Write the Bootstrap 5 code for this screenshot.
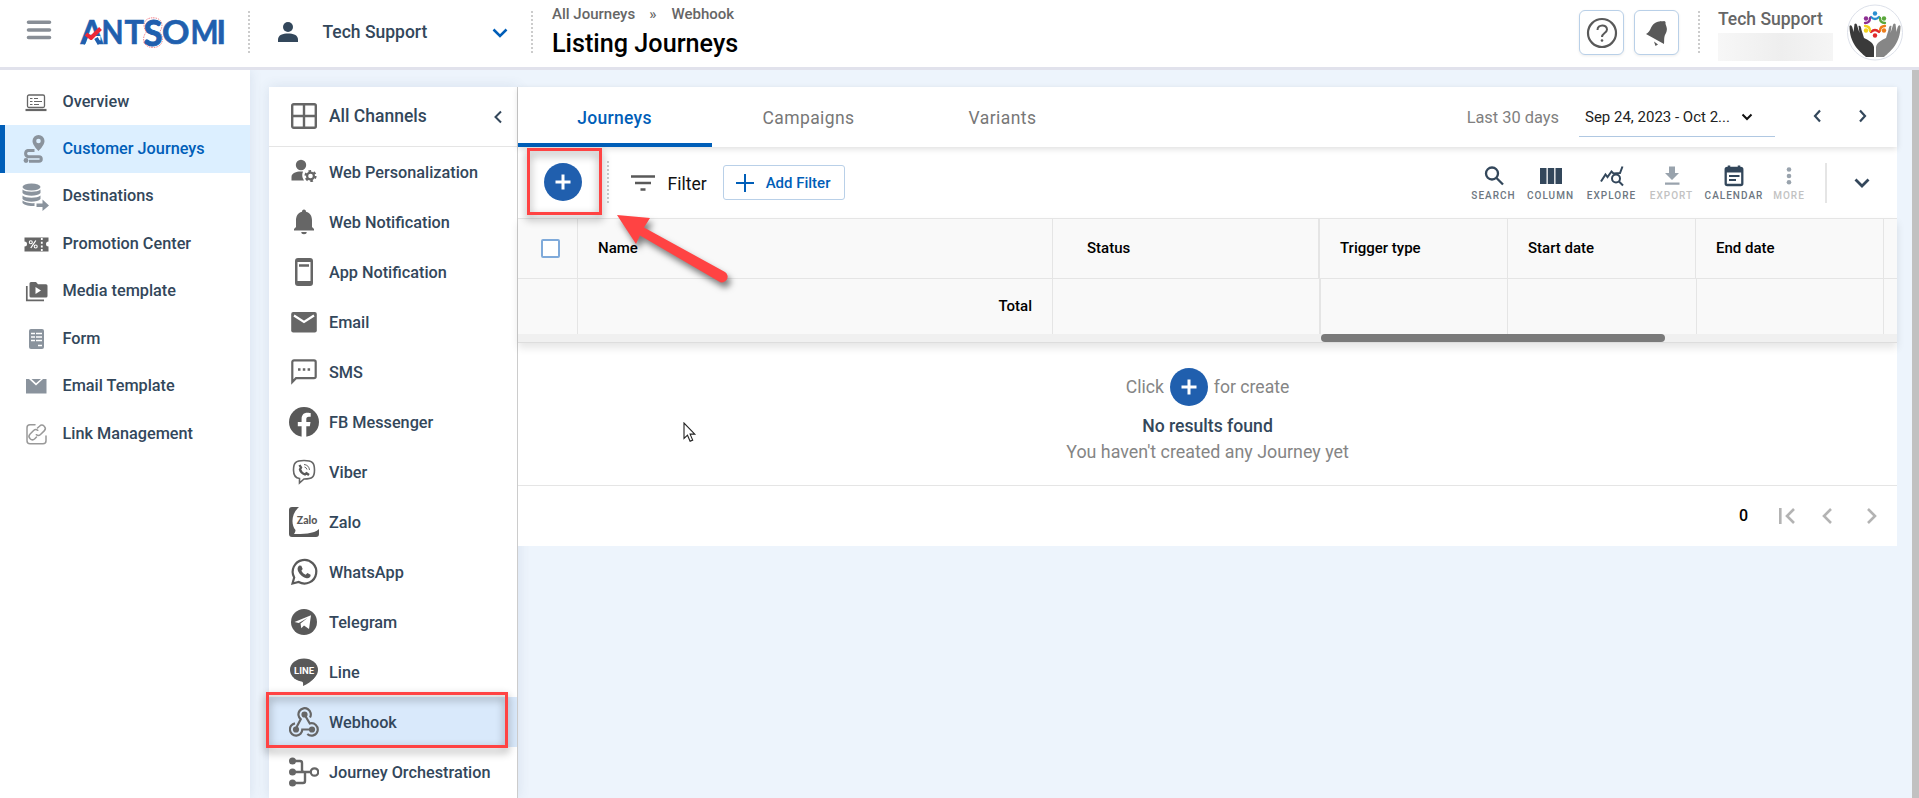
<!DOCTYPE html>
<html lang="en">
<head>
<meta charset="utf-8">
<meta name="viewport" content="width=device-width, initial-scale=1">
<title>Listing Journeys</title>
<link rel="stylesheet" href="https://cdn.jsdelivr.net/npm/bootstrap@5.3.0/dist/css/bootstrap.min.css">
<style>
  :root { --navy:#33475b; --blue:#005eb8; --line:#e5e5e5; --ico:#666; }
  body { font-family:Roboto,"Liberation Sans",sans-serif; font-size:16.25px; background:#edf4fc; color:var(--navy); height:798px; overflow:hidden; }
  svg { display:block; flex:none; }
  .fw-medium { font-weight:500; }
  .topbar { height:70px; background:#fff; border-bottom:3px solid #e1e2ec; padding-right:15px; position:relative; z-index:3; }
  .dots { width:2px; height:44px; flex:none; background:repeating-linear-gradient(#ccc 0 2px,transparent 2px 4px); }
  .t18 { font-size:17.5px; }
  .account { width:283px; }
  .crumbs { font-size:15px; line-height:18px; color:#666; padding-top:5px; }
  .page-title { font-size:25.2px; line-height:30px; color:#000; margin-top:6px; }
  .sq-btn { width:45px; height:45px; border:1px solid #b9d0e8; border-radius:6px; background:#fff; box-shadow:0 1px 3px rgba(0,0,0,.08); }
  .blurred { width:115px; height:28px; background:linear-gradient(90deg,#f7f7f7,#f2f2f2 30%,#eee 55%,#f5f5f5); }
  .body-row { height:728px; }
  .side { width:250px; background:#fff; padding-top:8px; box-shadow:0 0 12px rgba(60,80,120,.12); z-index:1; flex:none; }
  .side a { height:47.45px; display:flex; align-items:center; color:var(--navy); text-decoration:none; border-left:5px solid transparent; padding-left:17px; }
  .side a svg { width:28px; height:28px; margin-right:12.5px; }
  .side a.active { background:#dcefff; border-left-color:var(--blue); color:var(--blue); }
  .channels { width:249px; margin:17px 0 0 19px; background:#fff; border-right:1px solid #ccc; box-shadow:0 0 12px rgba(60,80,120,.12); flex:none; }
  .channels-head { height:60px; border-bottom:1px solid var(--line); padding:0 14px 0 20px; }
  .chan { height:50px; display:flex; align-items:center; padding:2px 0 0 20px; }
  .chan svg { width:30px; height:30px; margin:-2px 10px 0 0; }
  .channels-head .lead-ico { width:30px; height:30px; margin:-1px 10px 0 0; }
  .chan.active { background:#d9e9fb; }
  .mark-red { border:3px solid #ff4343; filter:drop-shadow(0 4px 4px rgba(0,0,0,.45)); position:absolute; z-index:4; pointer-events:none; }
  .mark-hook { left:-3px; top:-5px; width:242px; height:56px; }
  .mark-add { left:9px; top:1px; width:75px; height:67px; }
  .pane { margin-top:17px; width:1379px; height:459px; background:#fff; flex:none; }
  .tabs-row { height:60px; box-shadow:0 2px 6px rgba(0,0,0,.13); position:relative; z-index:1; }
  .tab { width:194px; height:60px; line-height:62.5px; text-align:center; font-size:17.5px; letter-spacing:.42px; color:#777; border-bottom:4px solid transparent; padding-right:1px; }
  .tab.active { color:var(--blue); font-weight:500; border-bottom-color:var(--blue); letter-spacing:.3px; }
  .range { width:196px; height:40px; border-bottom:1px solid #b0c8e2; font-size:15px; color:#222; padding:1px 22px 0 6px; margin:10px 38px 0 20px; }
  .tools { height:71px; }
  .add-btn { border:1px solid #b9d0e8; border-radius:3px; width:122px; height:35px; font-size:15px; color:var(--blue); background:#fff; }
  .circle-add { width:38px; height:38px; border-radius:50%; background:#205fae; display:grid; place-items:center; }
  .tool { font-size:10px; line-height:12px; letter-spacing:1.02px; font-weight:500; color:#6d7781; text-align:center; display:flex; flex-direction:column; align-items:center; }
  .tool svg { width:24px; height:24px; margin-bottom:2px; color:var(--navy); }
  .tool.off { color:#c2c2c2; } .tool.off svg { color:#99a3ad; }
  .grid { height:125px; background:#f9f9f9; border-top:1px solid var(--line); border-bottom:1px solid #ddd; box-shadow:0 5px 8px rgba(0,0,0,.1); font-size:15px; color:#000; font-weight:500; }
  .grow { display:grid; grid-template-columns:60px 475px 267px 188px 188px 188px 13px; }
  .grow > div { border-right:1px solid var(--line); padding-left:20px; display:flex; align-items:center; }
  .grow > div:last-child { border-right:0; }
  .grow .pin { border-right-width:2px; padding-left:34px; }
  .h-head { height:60px; border-bottom:1px solid var(--line); }
  .h-total { height:55px; grid-template-columns:60px 475px 268px 187px 189px 187px 13px; }
  .track { height:8px; background:#f0f0f0; }
  .thumb { width:344px; height:8px; border-radius:4px; background:#7a7a7a; margin-left:803px; }
  .cbx { width:19px; height:19px; border:2px solid #7faada; border-radius:2px; margin-left:3px; background:#fff; }
  .empty { height:143px; border-bottom:1px solid var(--line); padding-top:25px; color:#858585; font-size:17.6px; text-align:center; line-height:26px; }
  .vbar { width:7px; background:#c1c1c1; margin-left:15px; flex:none; }
  .arrow-red { position:absolute; left:94px; top:59px; z-index:5; filter:drop-shadow(3px 5px 3px rgba(0,0,0,.5)); }
  .pointer { position:absolute; left:683px; top:422px; z-index:5; }
</style>
</head>
<body>

<header class="topbar d-flex">
  <svg width="26" height="22" viewBox="0 0 26 22" style="margin:19px 0 0 26px"><path d="M2.500 3.300h21M2.500 11h21M2.500 18.500h21" stroke="#888e96" stroke-width="3.600" stroke-linecap="round"/></svg>
  <svg width="150" height="60" viewBox="77 4 150 60" style="margin:4px 0 0 25px">
    <g font-family="Lato,sans-serif" font-weight="700" font-size="32" fill="#205fae" stroke="#205fae" stroke-width=".6">
      <text x="80.500" y="44.200" textLength="22.500" lengthAdjust="spacingAndGlyphs">A</text>
      <text x="101.500" y="44.200" textLength="22" lengthAdjust="spacingAndGlyphs">N</text>
      <text x="124.500" y="44.200" textLength="19.500" lengthAdjust="spacingAndGlyphs">T</text>
      <text x="162" y="44.200" textLength="27.500" lengthAdjust="spacingAndGlyphs">O</text>
      <text x="190.500" y="44.200" textLength="28" lengthAdjust="spacingAndGlyphs">M</text>
      <text x="216.500" y="44.200">I</text>
      <text x="143.500" y="45.500" font-size="36" stroke-width="1" textLength="19" lengthAdjust="spacingAndGlyphs">S</text>
    </g>
    <path d="M153 17.800c10.500 0 10.500 9.500 6.500 14.200 5 5 4 15.500-6.500 15.500s-11.500-10.500-6.500-15.500c-4-4.700-4-14.200 6.500-14.200z" fill="none" stroke="#ef6a75" stroke-width=".8" stroke-dasharray="1.500 1"/>
    <path d="M85.500 36h15v4.500h-15z" fill="#fff"/>
    <path d="M83 44l4-9M96 38l3.500 6" stroke="#205fae" stroke-width="4"/>
    <path d="M86 34l5 4 9.500-9.500" fill="none" stroke="#ee2737" stroke-width="4" stroke-linejoin="round"/>
  </svg>
  <div class="dots" style="margin:11px 0 0 21px"></div>
  <div class="account d-flex align-items-center fw-medium t18" style="height:64px;padding-left:26px">
    <svg width="24" height="24" viewBox="0 0 24 24" fill="#33475b"><circle cx="12" cy="7" r="5"/><path d="M2 22v-2.500c0-4.500 5-6 10-6s10 1.500 10 6V22z"/></svg>
    <span style="margin-left:22.500px">Tech Support</span>
    <svg class="ms-auto" width="18" height="18" viewBox="0 0 18 18" fill="none" stroke="#005eb8" stroke-width="2.500" style="margin-right:24px"><path d="M2.500 6.500L9 13l6.500-6.500"/></svg>
  </div>
  <div class="dots" style="margin-top:11px;margin-left:-2px"></div>
  <div style="margin-left:19px">
    <div class="crumbs fw-medium d-flex"><span>All Journeys</span><span style="margin:0 15px 0 14px">»</span><span>Webhook</span></div>
    <div class="page-title fw-medium">Listing Journeys</div>
  </div>
  <div class="ms-auto d-flex">
    <div class="sq-btn d-grid" style="place-items:center;margin:10px 10px 0 0">
      <svg width="32" height="32" viewBox="0 0 32 32" fill="none" stroke="#595959" stroke-width="2.200"><circle cx="16" cy="16" r="14"/><path d="M11.500 13c0-6 9.500-6 9.500-.5 0 3.500-5 3.500-5 7.500" stroke-width="2"/><circle cx="16" cy="23.500" r="1.300" fill="#595959" stroke="none"/></svg>
    </div>
    <div class="sq-btn d-grid" style="place-items:center;margin:10px 19px 0 0">
      <svg width="28" height="28" viewBox="0 0 28 28" fill="#595959"><path d="M3 15c5-2 4-8 9-11 4-2.500 7-1.500 9-2 1 0 2 1 1.500 2-.3 2 3 5 .5 10-2.500 4-1.500 7-2 11z"/><path d="M11 22.500l4 3-2.500 1.500z"/></svg>
    </div>
    <div class="dots" style="margin:11px 18px 0 0"></div>
    <div style="width:128px;color:#666;font-size:17.500px;line-height:20px;padding-top:9px" class="fw-medium">Tech Support<div class="blurred" style="margin-top:4px"></div></div>
    <svg width="58" height="58" viewBox="1846 4 58 58" style="margin-top:4px">
      <circle cx="1875" cy="32.500" r="27.500" fill="#fff" stroke="#dde1ea"/>
      <path d="M1849.500 26c2-2 3 1 4 6l1-8q2-1.500 2.500 1l2.500 8-1-7c2-1 2.500 1 3 4l2.500 8c4 2 9 4 10 9v10h-8c-7-6-16.500-14-16.500-31z" fill="#3a3a3a"/>
      <path d="M1900.500 26c-2-2-3 1-4 6l-1-8q-2-1.500-2.500 1l-2.500 8 1-7c-2-1-2.500 1-3 4l-2.500 8c-4 2-9 4-10 9v10h8c7-6 16.500-14 16.500-31z" fill="#868686"/>
      <g fill="none" stroke-width="2.300" stroke-linecap="round">
        <path d="M1871 17q4 4 8 0" stroke="#2b8fd0"/><path d="M1880 18q0 5 5 5" stroke="#5ba83c"/><path d="M1885 26q-5 0-5 5" stroke="#ee7d1a"/><path d="M1879 32q-4-4-8 0" stroke="#e02a2a"/><path d="M1870 31q0-5-5-5" stroke="#f2d21c"/><path d="M1865 23q5 0 5-5" stroke="#8d2f92"/>
      </g>
      <circle cx="1875" cy="13.500" r="2.200" fill="#2b8fd0"/><circle cx="1884" cy="18.500" r="2.200" fill="#5ba83c"/><circle cx="1884" cy="30.500" r="2.200" fill="#ee7d1a"/><circle cx="1875" cy="35.500" r="2.200" fill="#e02a2a"/><circle cx="1866" cy="30.500" r="2.200" fill="#f2d21c"/><circle cx="1866" cy="18.500" r="2.200" fill="#8d2f92"/>
    </svg>
  </div>
</header>

<div class="body-row d-flex">
  <nav class="side fw-medium">
    <a><svg viewBox="0 0 28 28" fill="none" stroke="#666"><rect x="5.500" y="7" width="17" height="12.500" rx="1.500" stroke-width="1.300"/><path d="M8 10.500h2.500M8 13.500h2.500M8 16.500h2.500M12 10.500h4M12 13.500h8M12 16.500h5" stroke-width="1.200"/><path d="M3.500 22h21" stroke-width="2.200"/></svg>Overview</a>
    <a class="active"><svg viewBox="0 0 28 28"><path d="M16.500 0a6 6 0 0 1 6 6.200c0 4-6 9.800-6 9.800s-6-5.800-6-9.800a6 6 0 0 1 6-6.200z" fill="#8a939d"/><circle cx="16.500" cy="6" r="2.300" fill="#dcefff"/><path d="M12.500 15.500H6a3.200 3.200 0 0 0 0 6.200h11a2.300 2.300 0 0 1 0 4.600H7" fill="none" stroke="#8a939d" stroke-width="3"/><circle cx="4" cy="25.500" r="2.400" fill="#8a939d"/></svg>Customer Journeys</a>
    <a><svg viewBox="0 0 28 28" fill="#8a939d"><ellipse cx="9.500" cy="4" rx="9" ry="3.500"/><path d="M.5 6.500c3 3 15 3 18 0V10c-3 3.500-15 3.500-18 0zM.5 12.500c3 3 15 3 18 0V16c-3 3.500-15 3.500-18 0z"/><path d="M.5 18.500c3 2.500 9 3 12 2.500v3c-5 0-10-.5-12-3zM14.500 21.500h6v-4l6.500 6-6.500 5.500v-4h-6z" transform="translate(0 -1)"/></svg>Destinations</a>
    <a><svg viewBox="0 0 28 28"><path d="M2.500 7.500h24v4a2.500 2.500 0 0 0 0 5v5h-24v-5a2.500 2.500 0 0 0 0-5z" fill="#666"/><path d="M19.800 8v13" stroke="#fff" stroke-width="1.800" stroke-dasharray="2 1.700"/><path d="M13.800 10.500l-5 7.500" stroke="#fff" stroke-width="1.300"/><circle cx="8.800" cy="12.300" r="1.500" fill="none" stroke="#fff" stroke-width="1.100"/><circle cx="13.700" cy="16.500" r="1.500" fill="none" stroke="#fff" stroke-width="1.100"/></svg>Promotion Center</a>
    <a><svg viewBox="0 0 28 28"><path d="M9 5h5l2 2.200h8a1.500 1.500 0 0 1 1.500 1.500V19a1.500 1.500 0 0 1-1.500 1.500H9A1.500 1.500 0 0 1 7.500 19V6.500A1.500 1.500 0 0 1 9 5z" fill="#666"/><path d="M4.800 9v14.300H22" fill="none" stroke="#666" stroke-width="1.700"/><path d="M13.500 10l5.500 3.500-5.500 3.500z" fill="#fff"/></svg>Media template</a>
    <a><svg viewBox="0 0 28 28"><rect x="7" y="4" width="15" height="20" rx="2" fill="#8a939d"/><path d="M9 8.500h4M14 8.500h6M9 12h4M14 12h6M9 15.500h4M14 15.500h6M16 20.500h4" stroke="#fff" stroke-width="1.400"/></svg>Form</a>
    <a><svg viewBox="0 0 28 28"><path d="M4 7h3l7 6.500L21 7h3.500v14.500H4z" fill="#8a939d"/><path d="M9.500 7h9.500l-5 4.300z" fill="#8a939d"/></svg>Email Template</a>
    <a><svg viewBox="0 0 28 28" fill="none" stroke="#999" stroke-width="1.500" stroke-linecap="round"><path d="M13 4.800H8a3 3 0 0 0-3 3v13a3 3 0 0 0 3 3h13a3 3 0 0 0 3-3V16"/><path d="M15.500 8l2-1.800a3.300 3.300 0 0 1 4.700 4.700L18.500 14.500a3.300 3.300 0 0 1-4.200.2M14.500 17l-1.700 1.700a3.300 3.300 0 0 1-4.700-4.700l3.500-3.500a3.300 3.300 0 0 1 4.200-.2"/></svg>Link Management</a>
  </nav>

  <aside class="channels fw-medium">
    <div class="channels-head d-flex align-items-center t18">
      <svg class="lead-ico" viewBox="0 0 30 30" fill="none" stroke="#666" stroke-width="2.400"><rect x="3.200" y="3.200" width="23.600" height="23.600" rx="1.500"/><path d="M15 3v24M3 15h24"/></svg>All Channels
      <svg class="ms-auto" width="10" height="14" viewBox="0 0 10 14" fill="none" stroke="#33475b" stroke-width="2"><path d="M8 1.500L2.500 7 8 12.500"/></svg>
    </div>
    <div class="chan"><svg viewBox="0 0 30 30"><circle cx="12" cy="8" r="5.200" fill="#666"/><path d="M2.500 23.500V20c0-4 5-5.500 9-5.500h2.500q-2 5 1 9z" fill="#666"/><circle cx="21.500" cy="19" r="3.400" fill="none" stroke="#666" stroke-width="2.200"/><circle cx="21.500" cy="19" r="5" fill="none" stroke="#666" stroke-width="2.200" stroke-dasharray="2.600 2.636"/></svg>Web Personalization</div>
    <div class="chan"><svg viewBox="0 0 30 30" fill="#666"><path d="M15 2.500c1.300 0 2 1 2 2.200 4.500 1 6 5 6 8.800v6.500l2 2v1.500H5V22l2-2v-6.500c0-3.800 1.500-7.800 6-8.800 0-1.200.7-2.200 2-2.200zM12.300 25h5.400a2.700 2.200 0 0 1-5.400 0z"/></svg>Web Notification</div>
    <div class="chan"><svg viewBox="0 0 30 30"><path d="M9 1h12a3 3 0 0 1 3 3v22a3 3 0 0 1-3 3H9a3 3 0 0 1-3-3V4a3 3 0 0 1 3-3zM8.500 5v19h13V5z" fill="#666" fill-rule="evenodd"/><path d="M10 8.500h10" stroke="#666" stroke-width="2.500"/></svg>App Notification</div>
    <div class="chan"><svg viewBox="0 0 30 30"><rect x="2.200" y="5" width="25.600" height="20.500" rx="2" fill="#666"/><path d="M5 8.500l10 6.500 10-6.500" fill="none" stroke="#fff" stroke-width="2.200"/></svg>Email</div>
    <div class="chan"><svg viewBox="0 0 30 30"><path d="M3.300 25V5a1.700 1.700 0 0 1 1.700-1.700h20A1.700 1.700 0 0 1 26.700 5v14.500a1.700 1.700 0 0 1-1.700 1.700H7z" fill="none" stroke="#666" stroke-width="2.200"/><path d="M9 12.500h2.500M13.800 12.500h2.500M18.600 12.500h2.500" stroke="#666" stroke-width="2.500"/></svg>SMS</div>
    <div class="chan"><svg viewBox="0 0 30 30"><circle cx="15" cy="15" r="15" fill="#595959"/><path d="M12.600 30V19.300H8.800V15h3.800v-3.300c0-3.900 2.300-6 5.700-6 1.700 0 3.400.3 3.400.3v3.700h-1.900c-1.900 0-2.500 1.200-2.500 2.400V15h4.200l-.7 4.300h-3.500V30z" fill="#fff"/></svg>FB Messenger</div>
    <div class="chan"><svg viewBox="0 0 30 30" fill="none" stroke="#666" stroke-width="1.600"><path d="M10.500 26v-4.500C6 21 4.500 18.500 4.500 13c0-7 2-9.500 10.500-9.500S25.500 6 25.500 13s-2 9-10.500 9z"/><path d="M10.500 8l1.500 2.500-1 2q1 3.500 5 5l1.500-1.300 2.500 1.800" stroke-width="2.400" stroke="#595959"/><path d="M15 7.500q5 .5 5.500 5.500M15.500 10q2 .5 2.500 2.500" stroke-width="1"/></svg>Viber</div>
    <div class="chan"><svg viewBox="0 0 30 30"><path d="M3 0h7C2 7 2 18 6.500 23c0 2-1 3-1.500 4 8 0 20 0 25-5v5a3 3 0 0 1-3 3H3a3 3 0 0 1-3-3V3a3 3 0 0 1 3-3z" fill="#595959"/><text x="7.800" y="16.500" font-family="Lato,sans-serif" font-weight="900" font-size="10.500" fill="#595959" textLength="20.500" lengthAdjust="spacingAndGlyphs">Zalo</text></svg>Zalo</div>
    <div class="chan"><svg viewBox="0 0 30 30"><path d="M3.500 26.500l1.700-6A11.800 11.800 0 1 1 9.700 25z" fill="none" stroke="#595959" stroke-width="2.200"/><path d="M10.500 8.500l1.800.2 1.400 3.200-1.300 1.800c1 2 2.300 3.200 4.300 4.100l1.700-1.700 3.200 1.600c.4 2.500-2 4-4 3.500-4.500-1-8.600-5.200-9-9-.2-1.500.8-3.200 1.900-3.700z" fill="#595959"/></svg>WhatsApp</div>
    <div class="chan"><svg viewBox="0 0 30 30"><circle cx="15" cy="15" r="13" fill="#595959"/><path d="M5.500 15L22 8.300 20 22l-5-3.500-2.700 2.700-.8-4.800 7-5.300-8.800 5z" fill="#fff"/></svg>Telegram</div>
    <div class="chan"><svg viewBox="0 0 30 30"><ellipse cx="15" cy="13" rx="14" ry="11.500" fill="#595959"/><path d="M9 23c5 1 5.500 2 5 6 4-1.500 9-5 12-9z" fill="#595959"/><text x="5" y="16.800" font-family="Roboto,sans-serif" font-weight="700" font-size="9.500" fill="#fff" textLength="20" lengthAdjust="spacingAndGlyphs">LINE</text></svg>Line</div>
    <div class="chan active position-relative"><svg viewBox="0 0 30 30" fill="none" stroke="#666" stroke-width="2.200"><g fill="#666"><circle cx="15.500" cy="7.500" r="2"/><circle cx="7" cy="22.500" r="2"/><circle cx="23" cy="22.500" r="2"/></g><path d="M21 10.500a6.200 6.200 0 1 0-9.300 1.700l-4.700 9M15.500 7.500l5.300 9a6.200 6.200 0 1 1-2.500 10.500M6 16.300a6.200 6.200 0 1 0 7.300 6.200h9.700"/></svg>Webhook<div class="mark-red mark-hook"></div></div>
    <div class="chan"><svg viewBox="0 0 30 30" fill="none" stroke="#666" stroke-width="2.400"><path d="M4 4h7a2 2 0 0 1 2 2v7a2 2 0 0 0 2 2h6M4 15h17M4 26h10a2 2 0 0 0 2-2v-9"/><circle cx="25.500" cy="15" r="3.700" stroke-width="2.200"/><g fill="#666" stroke="none"><circle cx="3.500" cy="4" r="3.500"/><circle cx="3.500" cy="15" r="3.500"/><circle cx="3.500" cy="26" r="3.500"/></g></svg>Journey Orchestration</div>
  </aside>

  <main class="pane">
    <div class="tabs-row d-flex">
      <div class="tab active">Journeys</div><div class="tab">Campaigns</div><div class="tab">Variants</div>
      <div class="ms-auto d-flex" style="padding-right:30px">
        <div style="color:#808080;line-height:62px;font-size:16.400px">Last 30 days</div>
        <div class="range d-flex align-items-center justify-content-between"><span>Sep 24, 2023 - Oct 2...</span><svg width="12" height="10" viewBox="0 0 12 10" fill="none" stroke="#111" stroke-width="2"><path d="M1.500 2.500L6 7l4.500-4.500"/></svg></div>
        <div class="d-flex align-items-center" style="height:58px">
          <svg width="9" height="14" viewBox="0 0 9 14" fill="none" stroke="#33475b" stroke-width="2.200" style="margin-right:36px"><path d="M7 1.500L2 7l5 5.500"/></svg>
          <svg width="9" height="14" viewBox="0 0 9 14" fill="none" stroke="#33475b" stroke-width="2.200"><path d="M2 1.500L7 7l-5 5.500"/></svg>
        </div>
      </div>
    </div>

    <div class="tools d-flex position-relative">
      <div class="circle-add" style="margin:16px 0 0 26px"><svg width="18" height="18" viewBox="0 0 18 18"><path d="M9 1.500v15M1.500 9h15" stroke="#fff" stroke-width="3"/></svg></div>
      <div class="mark-red mark-add"></div>
      <svg class="arrow-red" width="120" height="80" viewBox="0 0 120 80" fill="#ff4343"><path d="M5 9l33 3-6 9.500 81 44.500a5.500 5.500 0 0 1-6 9.500L28 29.500 24 38z"/></svg>
      <div class="dots" style="margin:14px 22px 0 25px"></div>
      <svg width="24" height="20" viewBox="0 0 24 20" stroke="#595959" stroke-width="2.500" style="margin-top:26px"><path d="M0 3.500h24M4 10h16M9.500 16.500h5"/></svg>
      <div class="t18" style="color:#111;margin:24px 15px 0 12.500px">Filter</div>
      <div class="add-btn fw-medium d-flex align-items-center" style="margin:18px 0 0 1px;padding:1px 0 0 12px"><svg width="18" height="18" viewBox="0 0 18 18" style="margin-right:12px"><path d="M9 0v18M0 9h18" stroke="#005eb8" stroke-width="2"/></svg>Add Filter</div>
      <div class="d-flex ms-auto" style="padding-top:17px">
        <div class="tool" style="width:55px"><svg viewBox="0 0 24 24" fill="none" stroke="currentColor" stroke-width="2.300"><circle cx="10" cy="9.500" r="6"/><path d="M14.500 14l6.500 6.500"/></svg>SEARCH</div>
        <div class="tool" style="width:59px"><svg viewBox="0 0 24 24" fill="currentColor"><path d="M1 4h6.500v16H1zM8.800 4h6.400v16H8.800zM16.500 4H23v16h-6.500z"/></svg>COLUMN</div>
        <div class="tool" style="width:63px"><svg viewBox="0 0 24 24" fill="none" stroke="currentColor" stroke-width="2"><path d="M1 17.500l4.500-7 2 2.500 4-5.500 2 2L20 9l2.500-6.500"/><circle cx="16" cy="14.500" r="4"/><path d="M19 17.500l4 4"/></svg>EXPLORE</div>
        <div class="tool off" style="width:57px"><svg viewBox="0 0 24 24" fill="currentColor"><path d="M9 2.500h6V9h4l-7 7-7-7h4zM5 18.500h14.500v2.200H5z"/></svg>EXPORT</div>
        <div class="tool" style="width:68px"><svg viewBox="0 0 24 24" fill="none" stroke="currentColor"><rect x="3.700" y="4" width="16.600" height="17" rx="1.500" stroke-width="2.300"/><path d="M3 6.500h18" stroke-width="4"/><path d="M7 1.500v4M17 1.500v4" stroke-width="2.500"/><path d="M7 12h10.500M7 16h7" stroke-width="2.200"/></svg>CALENDAR</div>
        <div class="tool off" style="width:42px"><svg viewBox="0 0 24 24" fill="currentColor"><circle cx="12" cy="5.500" r="2.300"/><circle cx="12" cy="12" r="2.300"/><circle cx="12" cy="18.300" r="2.300"/></svg>MORE</div>
      </div>
      <div style="width:2px;height:40px;background:#e5e5e5;margin:16px 26px 0 15px"></div>
      <svg width="18" height="18" viewBox="0 0 18 18" fill="none" stroke="#33475b" stroke-width="2.800" style="margin:27px 26px 0 0"><path d="M2.500 5.500L9 12l6.500-6.500"/></svg>
    </div>

    <div class="grid">
      <div class="grow h-head"><div><span class="cbx"></span></div><div>Name</div><div class="pin">Status</div><div>Trigger type</div><div>Start date</div><div>End date</div><div></div></div>
      <div class="grow h-total"><div></div><div class="justify-content-end" style="padding-right:20px">Total</div><div class="pin"></div><div></div><div></div><div></div><div></div></div>
      <div class="track"><div class="thumb"></div></div>
    </div>

    <div class="empty">
      <div class="d-flex align-items-center justify-content-center" style="height:38px;gap:6px"><span>Click</span><span class="circle-add"><svg width="18" height="18" viewBox="0 0 18 18"><path d="M9 1.500v15M1.500 9h15" stroke="#fff" stroke-width="3"/></svg></span><span>for create</span></div>
      <div class="fw-medium" style="color:#33475b;margin-top:7px">No results found</div>
      <div style="font-size:17.850px">You haven't created any Journey yet</div>
    </div>

    <div class="d-flex align-items-center justify-content-end" style="height:60px;padding-right:18px">
      <span class="fw-medium" style="color:#000;font-size:16px;margin-right:29px">0</span>
      <svg width="20" height="20" viewBox="0 0 20 20" fill="none" stroke="#b3b3b3" stroke-width="2.600" style="margin-right:23px"><path d="M3.300 2v16M17 3l-7 7 7 7"/></svg>
      <svg width="14" height="20" viewBox="0 0 14 20" fill="none" stroke="#b3b3b3" stroke-width="2.600" style="margin-right:31px"><path d="M11 3l-7 7 7 7"/></svg>
      <svg width="14" height="20" viewBox="0 0 14 20" fill="none" stroke="#b3b3b3" stroke-width="2.600"><path d="M3 3l7 7-7 7"/></svg>
    </div>
  </main>
  <div class="vbar"></div>
</div>

<svg class="pointer" width="14" height="22" viewBox="0 0 14 22"><path d="M1 1v15.500l3.500-3.300 2.600 6 2.600-1.100-2.600-6h4.700z" fill="#fff" stroke="#222" stroke-width="1.100"/></svg>

<script src="https://cdn.jsdelivr.net/npm/bootstrap@5.3.0/dist/js/bootstrap.bundle.min.js"></script>
</body>
</html>
